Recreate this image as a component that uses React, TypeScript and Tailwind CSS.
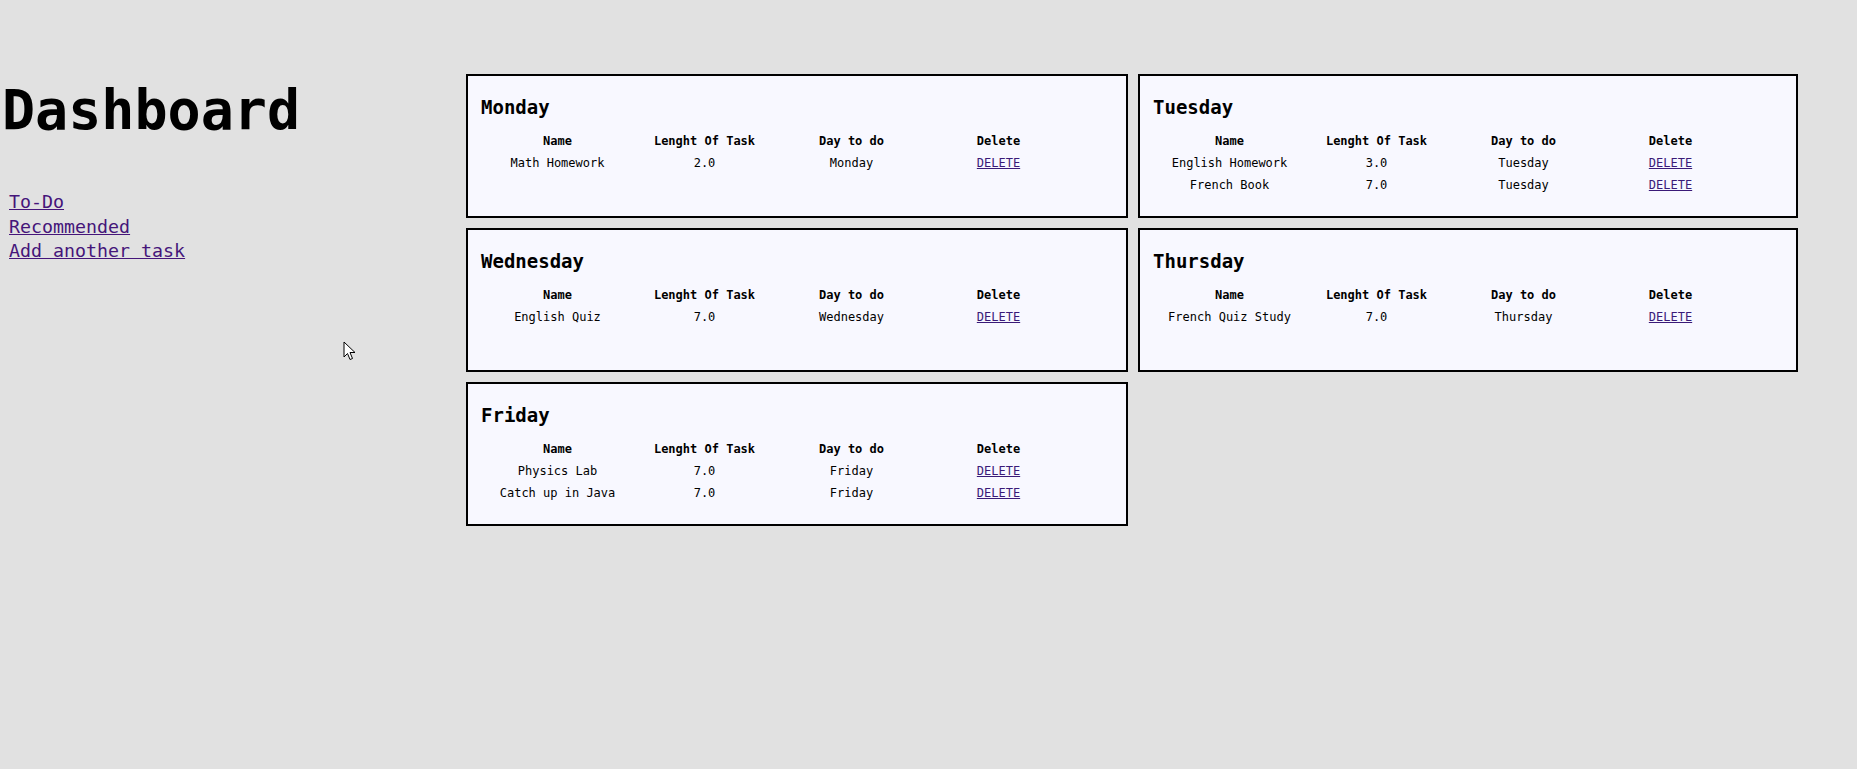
import React from "react";

interface Task {
  name: string;
  length: string;
  day: string;
}

interface DayCardProps {
  title: string;
  tasks: Task[];
}

const days: DayCardProps[] = [
  { title: "Monday", tasks: [{ name: "Math Homework", length: "2.0", day: "Monday" }] },
  {
    title: "Tuesday",
    tasks: [
      { name: "English Homework", length: "3.0", day: "Tuesday" },
      { name: "French Book", length: "7.0", day: "Tuesday" },
    ],
  },
  { title: "Wednesday", tasks: [{ name: "English Quiz", length: "7.0", day: "Wednesday" }] },
  { title: "Thursday", tasks: [{ name: "French Quiz Study", length: "7.0", day: "Thursday" }] },
  {
    title: "Friday",
    tasks: [
      { name: "Physics Lab", length: "7.0", day: "Friday" },
      { name: "Catch up in Java", length: "7.0", day: "Friday" },
    ],
  },
];

const mono = "font-['DejaVu_Sans_Mono','Liberation_Mono',monospace]";

const DayCard = ({ title, tasks }: DayCardProps) => {
  return (
    <div className="h-[144px] border-2 border-black bg-[#f8f8ff] px-[13px] pt-[22px]">
      <h2 className="text-[19px] font-bold leading-none text-black">{title}</h2>
      <div className="ml-[3px] mt-[13px] grid grid-cols-[147px_147px_147px_147px] text-[12px] text-black">
        <div className="flex h-[22px] items-center justify-center font-bold">Name</div>
        <div className="flex h-[22px] items-center justify-center font-bold">Lenght Of Task</div>
        <div className="flex h-[22px] items-center justify-center font-bold">Day to do</div>
        <div className="flex h-[22px] items-center justify-center font-bold">Delete</div>
        {tasks.map((t) => (
          <React.Fragment key={t.name}>
            <div className="flex h-[22px] items-center justify-center">{t.name}</div>
            <div className="flex h-[22px] items-center justify-center">{t.length}</div>
            <div className="flex h-[22px] items-center justify-center">{t.day}</div>
            <div className="flex h-[22px] items-center justify-center">
              <a href="#" className="text-[#3a1a78] underline">
                DELETE
              </a>
            </div>
          </React.Fragment>
        ))}
      </div>
    </div>
  );
};

const App = () => {
  return (
    <div className={`relative flex min-h-[769px] w-full bg-[#e1e1e1] ${mono}`}>
      <div className="w-[466px] shrink-0">
        <h1 className="ml-[2px] mt-[83px] text-[55px] font-bold leading-none text-black">Dashboard</h1>
        <nav className="mt-[52px] flex flex-col pl-[9px] text-[18.3px] leading-[24.5px]">
          <a href="#" className="w-fit text-[#45157a] underline">
            To-Do
          </a>
          <a href="#" className="w-fit text-[#45157a] underline">
            Recommended
          </a>
          <a href="#" className="w-fit text-[#45157a] underline">
            Add another task
          </a>
        </nav>
      </div>
      <div className="grid h-fit grid-cols-[662px_660px] gap-[10px] pt-[74px]">
        {days.map((d) => (
          <DayCard key={d.title} title={d.title} tasks={d.tasks} />
        ))}
      </div>
      {/* mouse pointer left in the screenshot */}
      <svg
        className="absolute left-[343px] top-[341px]"
        width="13"
        height="21"
        viewBox="0 0 13 21"
      >
        <path
          d="M1 1 L1 16 L4.5 12.5 L7 18.5 L9.5 17.5 L7 11.5 L12 11.5 Z"
          fill="white"
          stroke="black"
          strokeWidth="1"
          strokeLinejoin="round"
        />
      </svg>
    </div>
  );
};

export default App;
